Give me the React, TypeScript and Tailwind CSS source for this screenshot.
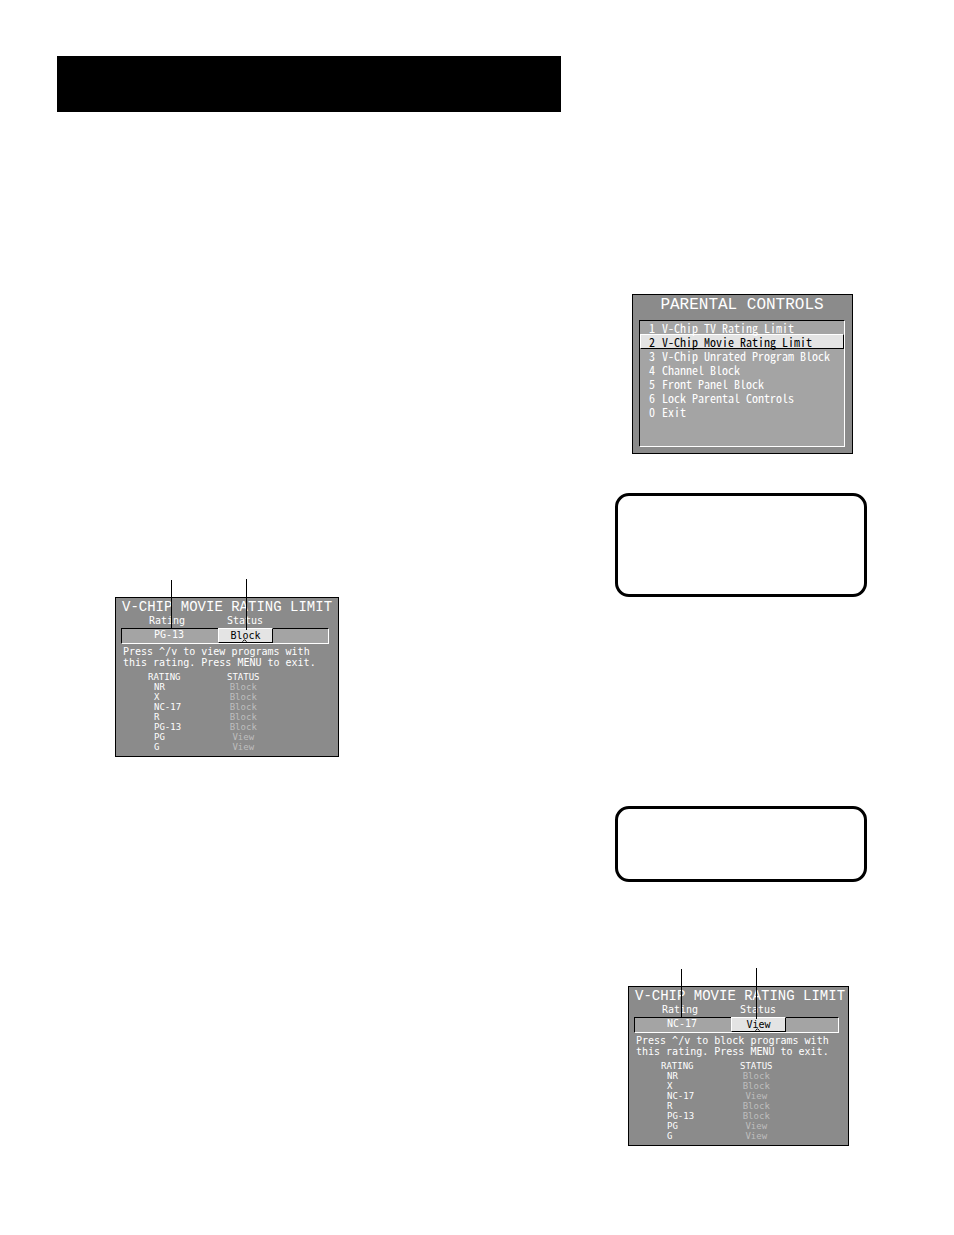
import React from 'react';
import clsx from 'clsx';

interface Entry {
  rating: string;
  status: 'Block' | 'View';
}

interface RatingScreenProps {
  selected: Entry;
  action: string;
  entries: Entry[];
  className: string;
  ratingLine: string;
  statusLine: string;
}

const MENU = [
  { key: '1', label: 'V-Chip TV Rating Limit' },
  { key: '2', label: 'V-Chip Movie Rating Limit' },
  { key: '3', label: 'V-Chip Unrated Program Block' },
  { key: '4', label: 'Channel Block' },
  { key: '5', label: 'Front Panel Block' },
  { key: '6', label: 'Lock Parental Controls' },
  { key: '0', label: 'Exit' },
];

const BEFORE: Entry[] = [
  { rating: 'NR', status: 'Block' },
  { rating: 'X', status: 'Block' },
  { rating: 'NC-17', status: 'Block' },
  { rating: 'R', status: 'Block' },
  { rating: 'PG-13', status: 'Block' },
  { rating: 'PG', status: 'View' },
  { rating: 'G', status: 'View' },
];

const AFTER: Entry[] = BEFORE.map(e => (e.rating === 'NC-17' ? { ...e, status: 'View' } : e));

const ParentalMenu: React.FC = () => (
  <nav className="ml-[17px] w-[221px] border border-black bg-[#8b8b8b] pt-[2px] pr-[7px] pb-[6px] pl-[6px] text-white">
    <h2 className="text-center font-['Liberation_Mono',monospace] text-[16px] leading-4">PARENTAL CONTROLS</h2>
    <ul className="mt-[7px] border border-t-black border-l-black border-r-white border-b-white bg-[#a4a4a4] pb-[27px] font-['Noto_Sans_Mono_CJK_JP','DejaVu_Sans_Mono',monospace] text-[12px] font-medium">
      {MENU.map((item, i) => (
        <li key={item.key}>
          <button
            type="button"
            className={clsx(
              'flex w-full whitespace-nowrap text-left',
              i === 0 && 'pl-[9px] leading-[13px]',
              i === 1 && 'border border-t-white border-l-white border-r-black border-b-black bg-[#e4e4e4] pl-2 leading-[13px] text-black',
              i > 1 && 'pl-[9px] leading-[14px]'
            )}
          >
            <span className="w-[13px]">{item.key}</span>
            <span>{item.label}</span>
          </button>
        </li>
      ))}
    </ul>
  </nav>
);

const RatingScreen: React.FC<RatingScreenProps> = ({ selected, action, entries, className, ratingLine, statusLine }) => (
  <section className={clsx("relative pt-[18px] font-['DejaVu_Sans_Mono',monospace] text-white", className)}>
    <div className="border border-black bg-[#8b8b8b] pt-px pb-1">
      <h2 className="whitespace-nowrap pl-[6px] font-['Liberation_Mono',monospace] text-[14px] leading-4">
        V-CHIP MOVIE RATING LIMIT
      </h2>
      <div className="flex text-[10px] leading-3">
        <span className="w-[111px] pl-[33px]">Rating</span>
        <span>Status</span>
      </div>
      <div className="mt-px mr-[9px] ml-[5px] flex h-4 border border-t-black border-l-black border-r-white border-b-white bg-[#a4a4a4] text-[10px] leading-3">
        <span className="w-24 pl-8">{selected.rating}</span>
        <button
          type="button"
          className="relative -mt-px h-[15px] w-[55px] border border-t-white border-l-white border-r-black border-b-black bg-[#e4e4e4] text-center leading-3 text-black"
        >
          {selected.status}
          <svg className="absolute bottom-0 left-[23px] h-[3px] w-[5px]" viewBox="0 0 5 3" fill="none" stroke="black">
            <path d="M0.5 2.7L2.5 0.7L4.5 2.7" />
          </svg>
        </button>
      </div>
      <p className="mt-[2px] pl-[7px] text-[10px] leading-[11px] whitespace-nowrap">
        Press ^/v to {action} programs with
        <br />
        this rating. Press MENU to exit.
      </p>
      <table className="mt-1 border-collapse text-[9px] leading-[10px]">
        <thead>
          <tr>
            <th className="w-[111px] p-0 pl-8 text-left font-normal">RATING</th>
            <th className="p-0 font-normal">STATUS</th>
          </tr>
        </thead>
        <tbody>
          {entries.map(e => (
            <tr key={e.rating}>
              <td className="p-0 pl-[38px]">{e.rating}</td>
              <td className="p-0 text-center text-[#bebebe]">{e.status}</td>
            </tr>
          ))}
        </tbody>
      </table>
    </div>
    {/* leader lines */}
    <span className={clsx('absolute top-px h-12 w-px bg-black', ratingLine)} />
    <span className={clsx('absolute top-0 h-[51px] w-px bg-black', statusLine)} />
  </section>
);

export default function App() {
  return (
    <main className="flex min-h-screen gap-[54px] bg-white pt-14 pr-[87px] pb-10 pl-[57px]">
      <div className="min-w-0 flex-1">
        <header className="h-14 bg-black" />
        <RatingScreen
          selected={{ rating: 'PG-13', status: 'Block' }}
          action="view"
          entries={BEFORE}
          className="mt-[467px] ml-[58px] w-[224px]"
          ratingLine="left-[56px]"
          statusLine="left-[131px]"
        />
      </div>
      <div className="w-[252px] shrink-0 pt-[238px]">
        <ParentalMenu />
        <aside className="mt-[39px] h-[104px] rounded-[14px] border-[3px] border-black" />
        <aside className="mt-[209px] h-[76px] rounded-[14px] border-[3px] border-black" />
        <RatingScreen
          selected={{ rating: 'NC-17', status: 'View' }}
          action="block"
          entries={AFTER}
          className="mt-[86px] ml-[13px] w-[221px]"
          ratingLine="left-[53px]"
          statusLine="left-[128px]"
        />
      </div>
    </main>
  );
}
